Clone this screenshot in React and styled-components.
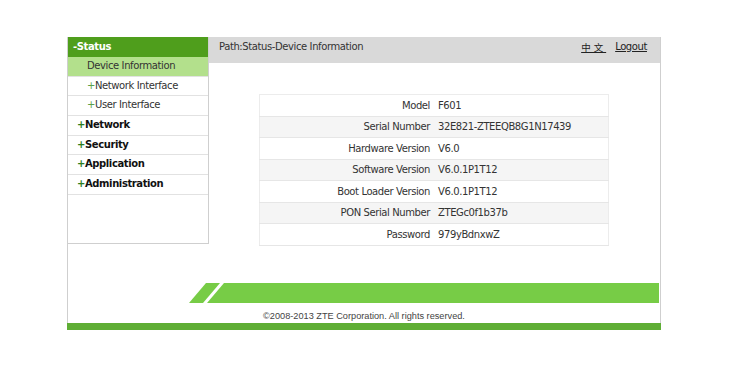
import React from "react";
import styled, { createGlobalStyle } from "styled-components";

const Global = createGlobalStyle`
  html, body { margin: 0; padding: 0; background: #ffffff; }
  body { font-family: "DejaVu Sans", Tahoma, sans-serif; letter-spacing: -0.4px; }
`;

const Frame = styled.div`
  margin: 37px 0 0 67px;
  width: 592px;
  border-left: 1px solid #cfcfcf;
  border-right: 1px solid #cfcfcf;
  display: flex;
  flex-direction: column;
`;

const Top = styled.div`
  display: flex;
  height: 246px;
`;

const Sidebar = styled.nav`
  width: 140px;
  height: 206px;
  border-right: 1px solid #cfcfcf;
  border-bottom: 1px solid #cfcfcf;
  display: flex;
  flex-direction: column;
  font-size: 10px;
`;

const MenuHead = styled.div`
  height: 20px;
  line-height: 20px;
  background: #4f9e1c;
  color: #ffffff;
  font-weight: bold;
  padding-left: 5px;
`;

const MenuItem = styled.div`
  height: 18.7px;
  line-height: 18.7px;
  border-bottom: 1px solid #e2e2e2;
  padding-left: ${(p) => (p.$sub ? "19px" : "9px")};
  background: ${(p) => (p.$active ? "#b3e08c" : "#ffffff")};
  color: ${(p) => (p.$bold ? "#111" : "#333")};
  font-weight: ${(p) => (p.$bold ? "bold" : "normal")};
  white-space: nowrap;
`;

const Plus = styled.span`
  color: ${(p) => (p.$bold ? "#2a7d1e" : "#5aa04a")};
  font-weight: ${(p) => (p.$bold ? "bold" : "normal")};
`;

const Main = styled.div`
  flex: 1;
  display: flex;
  flex-direction: column;
`;

const Header = styled.div`
  height: 26px;
  background: #d9d9d9;
  display: flex;
  justify-content: space-between;
  align-items: flex-start;
  padding: 3px 13px 0 10px;
  box-sizing: border-box;
  font-size: 10px;
  color: #333;
  line-height: 14px;
`;

const Links = styled.div`
  display: flex;
  gap: 9px;
`;

const Link = styled.a`
  color: #222;
  text-decoration: underline;
  font-family: ${(p) => (p.$cjk ? '"Noto Sans CJK SC", sans-serif' : "inherit")};
  font-size: ${(p) => (p.$cjk ? "9.5px" : "10px")};
  letter-spacing: ${(p) => (p.$cjk ? "3px" : "-0.4px")};
`;

const Table = styled.table`
  margin: 31px 0 0 50px;
  width: 350px;
  border-collapse: collapse;
  border: 1px solid #ececec;
  font-size: 10px;
  color: #333;
`;

const Row = styled.tr`
  height: 21.5px;
  background: ${(p) => (p.$alt ? "#f5f5f5" : "#ffffff")};
  border-bottom: 1px solid #e6e6e6;
`;

const Label = styled.td`
  width: 170px;
  text-align: right;
  padding: 0 5px 0 0;
`;

const Value = styled.td`
  padding: 0 0 0 3px;
`;

const Band = styled.div`
  display: flex;
  height: 20px;
  padding-left: 121px;
  padding-right: 1px;
`;

const Slash = styled.div`
  width: 31px;
  background: #77cc46;
  clip-path: polygon(17px 0, 31px 0, 14px 100%, 0 100%);
`;

const Bar = styled.div`
  flex: 1;
  margin-left: -13px;
  background: #77cc46;
  clip-path: polygon(17px 0, 100% 0, 100% 100%, 0 100%);
`;

const Copy = styled.div`
  height: 20px;
  line-height: 26px;
  text-align: center;
  font-family: "Liberation Sans", Arial, sans-serif;
  letter-spacing: 0;
  font-size: 9.2px;
  color: #444;
`;

const BottomBar = styled.div`
  height: 7px;
  background: #5fae35;
  margin: 0 -1px;
`;

const menuTop = [
  { label: "Device Information", active: true },
  { label: "Network Interface", plus: true },
  { label: "User Interface", plus: true },
];
const menuMain = ["Network", "Security", "Application", "Administration"];

const info = [
  ["Model", "F601"],
  ["Serial Number", "32E821-ZTEEQB8G1N17439"],
  ["Hardware Version", "V6.0"],
  ["Software Version", "V6.0.1P1T12"],
  ["Boot Loader Version", "V6.0.1P1T12"],
  ["PON Serial Number", "ZTEGc0f1b37b"],
  ["Password", "979yBdnxwZ"],
];

export default function App() {
  return (
    <>
      <Global />
      <Frame>
        <Top>
          <Sidebar>
            <MenuHead>-Status</MenuHead>
            {menuTop.map((m) => (
              <MenuItem key={m.label} $sub $active={m.active}>
                {m.plus && <Plus>+</Plus>}
                {m.label}
              </MenuItem>
            ))}
            {menuMain.map((m) => (
              <MenuItem key={m} $bold>
                <Plus $bold>+</Plus>
                {m}
              </MenuItem>
            ))}
          </Sidebar>
          <Main>
            <Header>
              <span>Path:Status-Device Information</span>
              <Links>
                <Link $cjk href="#">中文</Link>
                <Link href="#">Logout</Link>
              </Links>
            </Header>
            <Table>
              <tbody>
                {info.map(([k, v], i) => (
                  <Row key={k} $alt={i % 2 === 1}>
                    <Label>{k}</Label>
                    <Value>{v}</Value>
                  </Row>
                ))}
              </tbody>
            </Table>
          </Main>
        </Top>
        <Band>
          <Slash />
          <Bar />
        </Band>
        <Copy>©2008-2013 ZTE Corporation. All rights reserved.</Copy>
        <BottomBar />
      </Frame>
    </>
  );
}
